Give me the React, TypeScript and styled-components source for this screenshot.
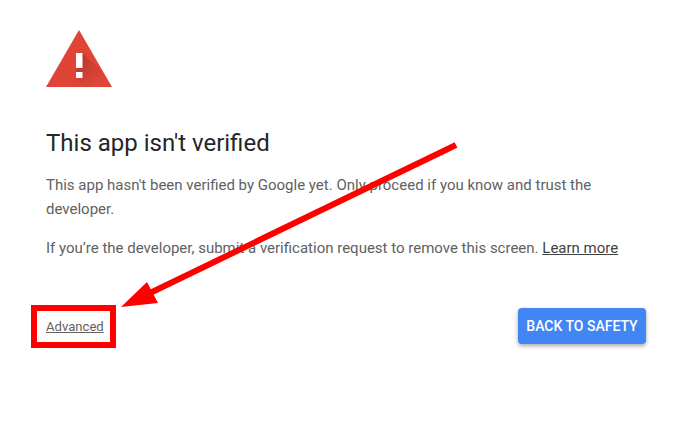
import React from "react";
import styled, { createGlobalStyle } from "styled-components";

const GlobalStyle = createGlobalStyle`
  html, body {
    margin: 0;
    padding: 0;
    background: #fff;
    font-family: Roboto, "Liberation Sans", sans-serif;
  }
`;

const Page = styled.div`
  position: relative;
  width: 689px;
  height: 442px;
  overflow: hidden;
`;

const Content = styled.main`
  width: 600px;
  padding: 30px 0 0 46px;
`;

const WarningIcon = styled.svg`
  display: block;
  width: 66px;
  height: 57px;
`;

const Heading = styled.h1`
  margin: 40px 0 0;
  font-size: 24px;
  line-height: 32px;
  font-weight: 400;
  color: #262626;
`;

const Text = styled.p`
  margin: 14px 0 15px;
  font-size: 15px;
  line-height: 24px;
  color: #616161;
`;

const DarkLink = styled.a`
  color: #424242;
  text-decoration: underline;
`;

const Footer = styled.div`
  display: flex;
  justify-content: space-between;
  align-items: center;
  margin-top: 48px;
  height: 36px;
`;

const AdvancedLink = styled.a`
  position: relative;
  font-size: 13.1px;
  color: #616161;
  text-decoration: underline;
`;

const Highlight = styled.span`
  position: absolute;
  left: -15px;
  top: -14px;
  width: 73px;
  height: 31px;
  border: 6px solid #ff0000;
`;

const SafetyButton = styled.button`
  width: 128px;
  height: 36px;
  padding: 0;
  border: 0;
  border-radius: 4px;
  background: #4285f4;
  color: #fff;
  font-family: inherit;
  font-size: 14px;
  font-weight: 500;
  box-shadow: 0 2px 4px rgba(0, 0, 0, 0.35);
`;

const ArrowOverlay = styled.svg`
  position: absolute;
  left: 0;
  top: 0;
  pointer-events: none;
`;

const App: React.FC = () => (
  <Page>
    <GlobalStyle />
    <Content>
      <WarningIcon viewBox="0 0 66 57">
        <defs>
          <linearGradient id="iconShadow" x1="36" y1="23" x2="58" y2="45" gradientUnits="userSpaceOnUse">
            <stop offset="0" stopColor="#8c2a20" stopOpacity="0.45" />
            <stop offset="1" stopColor="#8c2a20" stopOpacity="0" />
          </linearGradient>
        </defs>
        <path d="M33 0 L66 57 H0 Z" fill="#df4437" />
        <path d="M36.5 23 L58.8 45 L58.8 57 L39 57 L30 48 L30 23 Z" fill="url(#iconShadow)" />
        <rect x="30" y="23" width="6.5" height="15" fill="#fff" />
        <rect x="30" y="42" width="6.5" height="6" fill="#fff" />
      </WarningIcon>
      <Heading>This app isn't verified</Heading>
      <Text>
        This app hasn't been verified by Google yet. Only proceed if you know and trust the developer.
      </Text>
      <Text>
        If you’re the developer, submit a verification request to remove this screen.{" "}
        <DarkLink>Learn more</DarkLink>
      </Text>
      <Footer>
        <AdvancedLink>
          Advanced
          <Highlight />
        </AdvancedLink>
        <SafetyButton>BACK TO SAFETY</SafetyButton>
      </Footer>
    </Content>
    <ArrowOverlay width="689" height="442" viewBox="0 0 689 442">
      <line x1="456" y1="145" x2="150" y2="293" stroke="#ff0000" strokeWidth="6" />
      <polygon points="121,307 147,282 158,303" fill="#ff0000" />
    </ArrowOverlay>
  </Page>
);

export default App;
